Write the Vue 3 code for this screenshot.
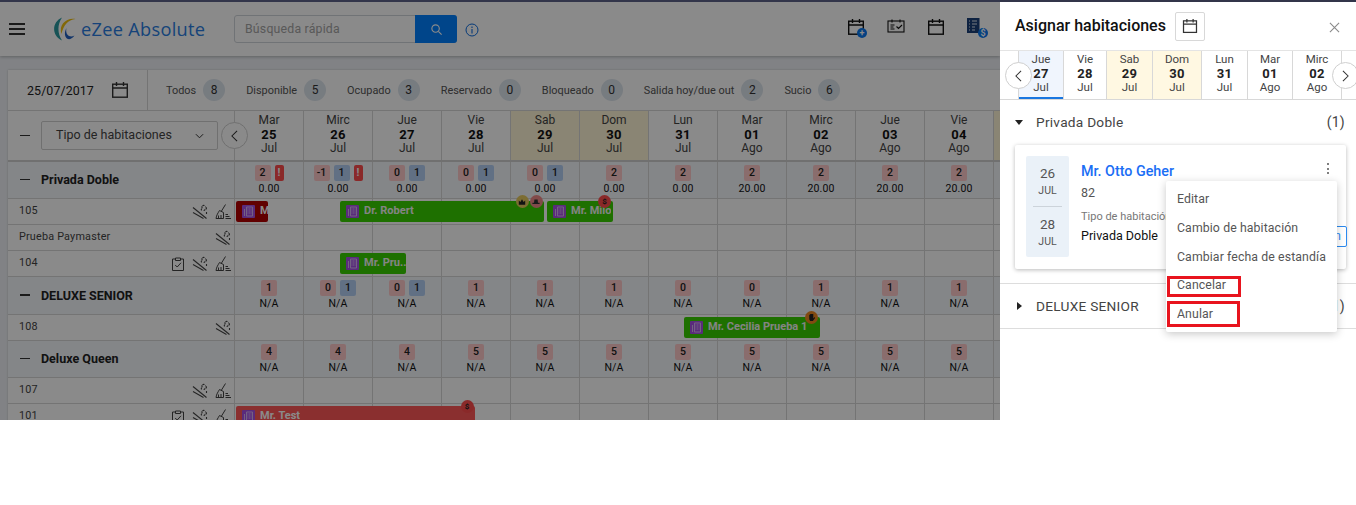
<script setup>
const days = [
  ['Mar','25','Jul'],['Mirc','26','Jul'],['Jue','27','Jul'],['Vie','28','Jul'],['Sab','29','Jul',1],['Dom','30','Jul',1],
  ['Lun','31','Jul'],['Mar','01','Ago'],['Mirc','02','Ago'],['Jue','03','Ago'],['Vie','04','Ago'],['Sab','05','Ago',1]
]
const stats = [['Todos',8],['Disponible',5],['Ocupado',3],['Reservado',0],['Bloqueado',0],['Salida hoy/due out',2],['Sucio',6]]
const p = (v, b, w) => ({ v, b, w })
const rows = [
  { type:'g', name:'Privada Doble', h:37, cells:[p(2,0,1),p(-1,1,1),p(0,1),p(0,1),p(0,1),p(2),p(2),p(2),p(2),p(2),p(2)],
    prices:['0.00','0.00','0.00','0.00','0.00','0.00','0.00','20.00','20.00','20.00','20.00'] },
  { type:'r', name:'105', icons:['smoke','broom'], h:26, bookings:[
    { t:'M', x:236, w:32, c:'dark' },
    { t:'Dr. Robert', x:340, w:204, c:'green', badges:[{k:'crown',x:182},{k:'hat',x:196}] },
    { t:'Mr. Milo', x:547, w:66, c:'green', badges:[{k:'dollar',x:57.5}] }
  ]},
  { type:'r', name:'Prueba Paymaster', icons:['smoke'], h:26 },
  { type:'r', name:'104', icons:['clip','smoke','broom'], h:26, bookings:[{ t:'Mr. Pru...', x:340, w:66, c:'green' }] },
  { type:'g', name:'DELUXE SENIOR', h:38, cells:[p(1),p(0,1),p(0,1),p(1),p(1),p(1),p(0),p(0),p(1),p(1),p(1)] },
  { type:'r', name:'108', icons:['smoke'], h:26, bookings:[{ t:'Mr. Cecilia Prueba 1', x:684, w:136, c:'green', badges:[{k:'hand',x:127.5}] }] },
  { type:'g', name:'Deluxe Queen', h:37, cells:[p(4),p(4),p(4),p(5),p(5),p(5),p(5),p(5),p(5),p(5),p(5)] },
  { type:'r', name:'107', icons:['smoke','broom'], h:26 },
  { type:'r', name:'101', icons:['clip','smoke','broom'], h:26, bookings:[{ t:'Mr. Test', x:236, w:239, c:'red', badges:[{k:'dollar',x:231,dark:1}] }] }
]
const strip = [
  ['Jue','27','Jul',45,'act'],['Vie','28','Jul',43,''],['Sab','29','Jul',46,'we'],['Dom','30','Jul',49,'we'],
  ['Lun','31','Jul',46,''],['Mar','01','Ago',45,''],['Mirc','02','Ago',49,'']
]
const menu = ['Editar','Cambio de habitación','Cambiar fecha de estandía','Cancelar','Anular']
</script>

<template>
  <div class="app">
    <svg class="defs" aria-hidden="true">
      <symbol id="smoke" viewBox="0 0 16 16">
        <g fill="none" stroke="currentColor" stroke-width="1.1">
          <path d="M1 3.5 L14.5 14.5"/>
          <path d="M1 8.5 L11.5 14.5"/>
          <path d="M9.5 6.5 C8.5 5 10.5 4.5 10 3 C9.8 2 11 1 12.5 1.5 M12 7 C12 5.5 14.5 5.5 14.5 4 C14.5 3 13.5 3 13 3 M14.5 10 V7.5" stroke-dasharray="2 .5"/>
        </g>
      </symbol>
      <symbol id="broom" viewBox="0 0 16 16">
        <g fill="none" stroke="currentColor" stroke-width="1">
          <path d="M10.5 .5 L6.5 7"/>
          <path d="M4.5 6.5 L8.5 8.5 L8.5 14.5 L1 14.5 C1.5 11 3 9 4.5 6.5 Z"/>
          <path d="M3.5 14.5 V11.5 M6 14.5 V11"/>
          <path d="M10.5 10.5 H13 M10.5 12.5 H14.5 M10.5 14.5 H16"/>
        </g>
      </symbol>
      <symbol id="clip" viewBox="0 0 14 14">
        <g fill="none" stroke="currentColor" stroke-width="1">
          <path d="M4.5 2 H1.5 V13.5 H12.5 V2 H9.5"/>
          <path d="M4.5 1 H9.5 V3.5 H4.5 Z"/>
          <path d="M4.2 8 L6.2 10 L10 5.8"/>
        </g>
      </symbol>
      <symbol id="cal" viewBox="0 0 18 18">
        <g fill="none" stroke="currentColor" stroke-width="1.4">
          <rect x="1.7" y="3.2" width="14.6" height="13" />
          <path d="M1.7 7 H16.3 M5.5 1 V5 M12.5 1 V5"/>
        </g>
      </symbol>
      <symbol id="bld" viewBox="0 0 13 13">
        <rect width="13" height="13" rx="1" fill="#a650e6"/>
        <path d="M2.5 4 V11 M4.5 2 H10.5 V11 H4.5 Z" fill="none" stroke="#d6b4f2" stroke-width="1"/>
        <path d="M5.5 4 H9.5 M5.5 6 H9.5 M5.5 8 H9.5" stroke="#d6b4f2" stroke-width="1" stroke-dasharray="1 .5"/>
      </symbol>
    </svg>

    <div class="strip"></div>
    <div class="body">
      <div class="main">
        <header class="topbar">
          <button class="burger"><i></i><i></i><i></i></button>
          <svg class="logo" viewBox="0 0 24 24" width="24" height="24">
            <path d="M9 .5 C-1 5 -2 18 9 23.500 C4.500 17 4 8 9 .5Z" fill="#2c9aa0"/>
            <path d="M8.500 17 C5.500 8 13 .5 22.500 2 C15 3 10.500 8 8.500 17Z" fill="#f0c010"/>
            <path d="M21.500 18.500 C16 21.500 12 17 13.500 11 C9 19 15 27 21.500 18.500Z" fill="#1f5fc0"/>
          </svg>
          <span class="brand">eZee Absolute</span>
          <div class="search">
            <span class="ph">Búsqueda rápida</span>
            <span class="sbtn">
              <svg viewBox="0 0 14 14" width="13" height="13"><circle cx="6" cy="6" r="4" fill="none" stroke="#fff" stroke-width="1.2"/><path d="M9 9 L12.5 12.5" stroke="#fff" stroke-width="1.2"/></svg>
            </span>
          </div>
          <svg class="info" viewBox="0 0 14 14" width="14" height="14"><circle cx="7" cy="7" r="6" fill="none" stroke="#0a6be0" stroke-width="1"/><path d="M7 6 V10.5 M7 3.5 V5" stroke="#0a6be0" stroke-width="1.1"/></svg>
          <div class="tools">
            <span class="tool"><svg class="ic18"><use href="#cal"/></svg><em class="plus">+</em></span>
            <span class="tool">
              <svg viewBox="0 0 18 18" width="18" height="18"><g fill="none" stroke="#111" stroke-width="1.1"><rect x="1" y="3" width="16" height="11"/><path d="M5 1.5 V4.5 M13 1.5 V4.5 M3.5 7 H7.5 M3.5 9 H6.5 M3.5 11 H7.5 M9.5 8.5 L11.5 10.5 L15 7"/></g></svg>
            </span>
            <span class="tool"><svg class="ic18"><use href="#cal"/></svg></span>
            <span class="tool">
              <svg viewBox="0 0 14 16" width="14" height="16"><rect width="12.5" height="15" fill="#1a3f78"/><path d="M2 3 H3 M5 3 H10 M2 6 H3 M5 6 H10 M2 9 H3 M5 9 H8 M2 12 H3 M5 12 H8" stroke="#dfe6f0"/></svg>
              <em class="tdollar">$</em>
            </span>
          </div>
        </header>

        <section class="card">
          <div class="toolbar">
            <div class="datebox">
              <span>25/07/2017</span>
              <svg class="ic18 dk"><use href="#cal"/></svg>
            </div>
            <div class="stats">
              <span v-for="s in stats" :key="s[0]" class="stat">
                <span class="lab">{{ s[0] }}</span><b class="num">{{ s[1] }}</b>
              </span>
            </div>
          </div>

          <div class="row head">
            <div class="side headside">
              <span class="dash"></span>
              <div class="select">
                <span class="seltxt">Tipo de habitaciones</span>
                <svg viewBox="0 0 10 6" width="9" height="6"><path d="M1 1 L5 5 L9 1" fill="none" stroke="#333" stroke-width="1.1"/></svg>
              </div>
              <button class="nav prev">
                <svg viewBox="0 0 10 14" width="9" height="12"><path d="M8 1 L2 7 L8 13" fill="none" stroke="#333" stroke-width="1.2"/></svg>
              </button>
            </div>
            <div v-for="d in days" :key="d[1]" class="day" :class="{ we: d[3] }">
              <span>{{ d[0] }}</span><b>{{ d[1] }}</b><span>{{ d[2] }}</span>
            </div>
          </div>

          <div v-for="r in rows" :key="r.name" class="row" :class="r.type === 'g' ? 'group' : 'room'" :style="{ height: r.h + 'px' }">
            <template v-if="r.type === 'g'">
              <div class="side gside"><span class="dash"></span><b>{{ r.name }}</b></div>
              <div v-for="(c, i) in r.cells" :key="i" class="cell gcell">
                <div class="chips">
                  <span class="chip pink">{{ c.v }}</span>
                  <span v-if="c.b" class="chip blue">{{ c.b }}</span>
                  <span v-if="c.w" class="chip warn">!</span>
                </div>
                <span class="price">{{ r.prices ? r.prices[i] : 'N/A' }}</span>
              </div>
              <div class="cell"></div>
            </template>
            <template v-else>
              <div class="side rside">
                <span class="rname">{{ r.name }}</span>
                <span class="ricons">
                  <svg v-for="ic in r.icons" :key="ic" class="ric" :class="ic"><use :href="'#' + ic"/></svg>
                </span>
              </div>
              <div v-for="i in 12" :key="i" class="cell"></div>
              <div v-for="b in r.bookings" :key="b.t" class="booking" :class="b.c" :style="{ left: (b.x - 8) + 'px', width: b.w + 'px' }">
                <svg class="bic"><use href="#bld"/></svg>
                <span class="btxt">{{ b.t }}</span>
                <span v-for="g in b.badges" :key="g.k" class="badge" :class="g.k" :style="{ left: (g.x - 6.5) + 'px' }">
                  <template v-if="g.k === 'dollar'">$</template>
                  <svg v-else-if="g.k === 'crown'" viewBox="0 0 10 10" width="8" height="8"><path d="M1 3 L3 5 L5 1.5 L7 5 L9 3 V8.5 H1Z" fill="#222"/></svg>
                  <svg v-else-if="g.k === 'hat'" viewBox="0 0 10 10" width="8" height="8"><path d="M3 2 H7 L7.5 6 H9.5 V7.500 H.5 V6 H2.5Z" fill="#333"/></svg>
                  <svg v-else viewBox="0 0 10 10" width="9" height="9"><path d="M2.5 4 V2 H3.5 V1 H7 V6 L8.5 4.5 L9 5.5 L6.500 9 H3.5 L2.5 7Z" fill="#222"/></svg>
                </span>
              </div>
            </template>
          </div>
        </section>
        <div class="overlay"></div>
      </div>

      <aside class="panel">
        <div class="ptitle">
          <h2>Asignar habitaciones</h2>
          <button class="calbtn"><svg class="ic16"><use href="#cal"/></svg></button>
          <svg class="close" viewBox="0 0 12 12" width="11" height="11"><path d="M1 1 L11 11 M11 1 L1 11" stroke="#8a8a8a" stroke-width="1.2"/></svg>
        </div>
        <div class="pstrip">
          <div class="pspace"></div>
          <div v-for="d in strip" :key="d[1]" class="pday" :class="d[4]" :style="{ width: d[3] + 'px' }">
            <span>{{ d[0] }}</span><b>{{ d[1] }}</b><span class="plast">{{ d[2] }}</span>
          </div>
          <button class="nav pprev"><svg viewBox="0 0 10 14" width="9" height="12"><path d="M8 1 L2 7 L8 13" fill="none" stroke="#333" stroke-width="1.2"/></svg></button>
          <button class="nav pnext"><svg viewBox="0 0 10 14" width="9" height="12"><path d="M2 1 L8 7 L2 13" fill="none" stroke="#333" stroke-width="1.2"/></svg></button>
        </div>

        <div class="acc first">
          <span class="caret down"></span><span class="accname">Privada Doble</span><span class="cnt">(1)</span>
        </div>
        <div class="gcard">
          <div class="dates">
            <div class="dt"><span class="dn">26</span><span class="dm">JUL</span></div>
            <i></i>
            <div class="dt"><span class="dn">28</span><span class="dm">JUL</span></div>
          </div>
          <div class="ginfo">
            <a class="gname">Mr. Otto Geher</a>
            <span class="gnum">82</span>
            <span class="gtype">Tipo de habitación</span>
            <span class="gval">Privada Doble</span>
          </div>
          <span class="kebab"><i></i><i></i><i></i></span>
          <span class="assign">Asignar habitación</span>
        </div>
        <div class="acc second">
          <span class="caret right"></span><span class="accname">DELUXE SENIOR</span><span class="cnt">(1)</span>
        </div>
        <ul class="menu">
          <li v-for="m in menu" :key="m">{{ m }}</li>
        </ul>
        <span class="mark m1"></span>
        <span class="mark m2"></span>
      </aside>
    </div>
  </div>
</template>

<style scoped>
.app { width: 1356px; height: 420px; overflow: hidden; position: relative; font-family: Roboto, "Liberation Sans", sans-serif; color: #222; display: flex; flex-direction: column; }
.defs { position: absolute; width: 0; height: 0; }
.strip { height: 2px; background: #32354a; flex: none; position: relative; z-index: 3; }
.body { display: flex; flex: 1; min-height: 0; }
.main { width: 1000px; position: relative; overflow: hidden; background: #eef1f5; flex: none; }
.overlay { position: absolute; inset: 0; background: rgba(0,0,0,.46); }

.topbar { height: 54px; background: #fff; display: flex; align-items: center; box-shadow: 0 1px 3px rgba(0,0,0,.25); position: relative; }
.burger { width: 16px; height: 12px; margin-left: 9px; padding: 0; border: 0; background: none; display: flex; flex-direction: column; justify-content: space-between; }
.burger i { display: block; height: 2px; background: #333; }
.logo { margin-left: 28px; }
.brand { margin-left: 4px; width: 128px; font-size: 18.2px; color: #2a7de1; font-family: "Open Sans", sans-serif; letter-spacing: .3px; white-space: nowrap; }
.search { margin-left: 25px; width: 223px; height: 28px; border: 1px solid #cfd4da; border-radius: 3px; box-sizing: border-box; display: flex; align-items: center; justify-content: space-between; }
.ph { font-size: 12.3px; color: #a4a4a4; margin-left: 10px; letter-spacing: .2px; }
.sbtn { width: 42px; height: 28px; margin-right: -1px; background: #0080ff; border-radius: 0 3px 3px 0; display: flex; align-items: center; justify-content: center; }
.info { margin-left: 8px; margin-top: 2px; }
.tools { display: flex; margin-left: 368px; margin-top: -4px; gap: 22px; align-items: center; }
.tool { width: 18px; height: 18px; position: relative; display: block; color: #111; }
.ic18 { width: 18px; height: 18px; display: block; }
.ic16 { width: 16px; height: 16px; display: block; }
.plus, .tdollar { position: absolute; right: -2px; bottom: -2px; width: 10px; height: 10px; border-radius: 50%; background: #0a78f0; color: #fff; font-size: 9px; line-height: 10px; text-align: center; font-style: normal; font-weight: 700; }
.tdollar { right: -3px; bottom: -2px; }

.card { margin: 14px 0 0 8px; background: #fff; width: 1010px; box-shadow: 0 0 2px rgba(0,0,0,.2); }
.toolbar { height: 41px; box-sizing: border-box; border-bottom: 1px solid #d6d6d6; display: flex; }
.datebox { width: 140px; box-sizing: border-box; border-right: 1px solid #d6d6d6; padding-left: 19px; padding-right: 18px; display: flex; align-items: center; justify-content: space-between; font-size: 12.4px; letter-spacing: .1px; }
.dk { color: #333; }
.stats { display: flex; align-items: center; padding-left: 18px; gap: 21px; }
.stat { display: flex; align-items: center; gap: 7px; }
.lab { font-size: 10.9px; color: #555; white-space: nowrap; }
.num { width: 22px; height: 22px; border-radius: 50%; background: #dde5ed; font-weight: 400; font-size: 12px; display: flex; align-items: center; justify-content: center; color: #333; }

.row { display: grid; grid-template-columns: 227px repeat(12, 69px); box-sizing: border-box; position: relative; border-bottom: 1px solid #d6d6d6; }
.head { height: 51px; border-bottom: 2px solid #d0d0d0; }
.side { border-right: 1px solid #d6d6d6; box-sizing: border-box; display: flex; align-items: center; position: relative; }
.headside { padding-left: 12px; }
.dash { display: block; width: 10px; height: 1.5px; background: #333; flex: none; }
.select { margin-left: 11px; width: 177px; height: 29px; box-sizing: border-box; border: 1px solid #cfcfcf; border-radius: 2px; padding: 0 13px 0 14px; display: flex; align-items: center; justify-content: space-between; font-size: 12.5px; color: #444; white-space: nowrap; }
.seltxt { margin-top: -2px; }
.nav { position: absolute; width: 27px; height: 27px; border-radius: 50%; border: 1px solid #cfcfcf; background: #fff; padding: 0; display: flex; align-items: center; justify-content: center; }
.prev { left: 213px; top: 11px; }
.day { border-right: 1px solid #d6d6d6; display: flex; flex-direction: column; align-items: center; font-size: 12px; line-height: 14px; color: #444; padding-top: 2px; box-sizing: border-box; }
.day b { font-size: 13px; font-weight: 700; color: #111; line-height: 14px; letter-spacing: .2px; margin: 1px 0 -1px; }
.day.we { background: #fff5d6; }

.group { background: #f4f7fc; }
.gside { padding: 0 0 1px 12px; font-size: 12.5px; color: #222; }
.gside b { margin-left: 11px; font-weight: 700; white-space: nowrap; }
.cell { border-right: 1px solid #d6d6d6; box-sizing: border-box; }
.gcell { display: flex; flex-direction: column; align-items: center; padding-top: 3px; }
.chips { display: flex; gap: 4px; }
.chip { height: 16px; min-width: 16px; border-radius: 2px; font-size: 10.5px; line-height: 16px; text-align: center; font-weight: 500; color: #222; }
.pink { background: #ffcaca; }
.blue { background: #b4d0f4; }
.warn { background: #ff4d4d; color: #fff; min-width: 9px; font-weight: 700; }
.price { font-size: 10.5px; line-height: 14px; margin-top: 1px; letter-spacing: .15px; color: #111; }

.rside { padding: 0 3px 0 11px; justify-content: space-between; }
.rname { font-size: 10.8px; color: #444; white-space: nowrap; letter-spacing: .2px; margin-top: -2px; }
.ricons { display: flex; align-items: center; gap: 7px; color: #444; }
.ric { width: 16px; height: 16px; display: block; }
.ric.clip { width: 14px; height: 14px; }

.booking { position: absolute; top: 2px; height: 21px; border-radius: 2px; display: flex; align-items: center; padding-left: 6px; box-sizing: border-box; color: #fff; font-size: 11px; font-weight: 700; white-space: nowrap; }
.btxt { margin: -2px 0 0 5px; overflow: hidden; }
.bic { width: 13px; height: 13px; flex: none; }
.green { background: #39cf00; color: #f4f4f4; }
.dark { background: #b40000; }
.red { background: #ff5858; }
.badge { position: absolute; top: -6px; width: 13px; height: 13px; border-radius: 50%; display: flex; align-items: center; justify-content: center; font-size: 8px; font-weight: 700; color: #222; line-height: 1; }
.crown { background: #e6c95e; }
.hat { background: #f08a8a; }
.badge.dollar { background: #ff4c4c; }
.badge.hand { background: #f08a20; }

.panel { width: 356px; background: #fff; position: relative; flex: none; overflow: hidden; }
.ptitle { height: 48px; display: flex; align-items: center; padding-left: 15px; position: relative; }
.ptitle h2 { margin: -2px 0 0; font-size: 16px; font-weight: 500; color: #111; white-space: nowrap; }
.calbtn { margin-left: 9px; width: 30px; height: 29px; background: #fff; border: 1px solid #d8d8d8; border-radius: 2px; padding: 0; display: flex; align-items: center; justify-content: center; color: #333; }
.close { position: absolute; left: 329px; top: 20px; }
.pstrip { height: 50px; display: flex; box-sizing: border-box; border-top: 1px solid #e4e4e4; border-bottom: 1px solid #d8d8d8; position: relative; }
.pspace { width: 18px; border-right: 1px solid #d8d8d8; flex: none; }
.pday { box-sizing: border-box; border-right: 1px solid #d8d8d8; display: flex; flex-direction: column; align-items: center; font-size: 11.5px; line-height: 14px; padding-top: 1px; color: #444; position: relative; }
.pday b { font-size: 13px; line-height: 16px; font-weight: 700; color: #222; letter-spacing: .2px; }
.plast { margin-top: -2px; }
.pday.act { background: #f0f5fd; box-shadow: inset 0 -2px 0 #1976e0; }
.pday.we { background: #fff8e2; }
.pprev { left: 5px; top: 11px; }
.pnext { left: 332px; top: 11px; }

.acc { display: flex; align-items: center; font-size: 13.7px; color: #444; padding: 0 11px 0 15px; letter-spacing: .25px; box-sizing: border-box; }
.acc.first { height: 44px; margin-bottom: 1px; }
.accname { margin-left: 13px; flex: 1; }
.cnt { color: #444; font-size: 14px; }
.caret { width: 0; height: 0; display: block; }
.caret.down { border-left: 4px solid transparent; border-right: 4px solid transparent; border-top: 5px solid #222; }
.caret.right { border-top: 4px solid transparent; border-bottom: 4px solid transparent; border-left: 5px solid #222; margin-left: 2px; margin-right: 1px; }
.acc.second { height: 46px; border-top: 1px solid #ddd; border-bottom: 1px solid #ddd; margin-top: 14px; }

.gcard { margin: 0 10px 0 15px; height: 124px; background: #fff; border-radius: 2px; box-shadow: 0 1px 4px rgba(0,0,0,.28); box-sizing: border-box; padding: 11px 0 0 11px; display: flex; position: relative; }
.dates { width: 43px; height: 101px; background: #eaf1f8; border-radius: 2px; display: flex; flex-direction: column; align-items: center; flex: none; }
.dates i { width: 29px; height: 1px; background: #ccd3da; margin-top: 8px; }
.dt { display: flex; flex-direction: column; align-items: center; padding-top: 9px; color: #555; }
.dn { font-size: 13.5px; line-height: 17px; }
.dm { font-size: 10.5px; line-height: 14px; margin-top: 2px; }
.ginfo { margin-left: 12px; display: flex; flex-direction: column; }
.gname { font-size: 14.3px; font-weight: 500; color: #1a6ef5; line-height: 18px; margin-top: 6px; }
.gnum { font-size: 12.5px; color: #555; line-height: 15px; margin-top: 5px; }
.gtype { font-size: 11px; color: #777; line-height: 14px; margin-top: 10px; white-space: nowrap; }
.gval { font-size: 12.5px; color: #111; line-height: 15px; margin-top: 4px; }
.kebab { position: absolute; left: 312px; top: 18px; display: flex; flex-direction: column; gap: 2.5px; }
.kebab i { width: 2px; height: 2px; background: #555; border-radius: 50%; display: block; }
.assign { position: absolute; right: -1px; top: 81px; height: 21px; box-sizing: border-box; border: 1px solid #2b8af0; border-radius: 2px; padding: 0 5px; font-size: 12px; line-height: 19px; color: #2b8af0; white-space: nowrap; }

.menu { position: absolute; left: 166px; top: 179px; width: 171px; height: 151px; margin: 0; padding: 4px 0 0; list-style: none; background: #fff; border-radius: 2px; box-shadow: 0 2px 8px rgba(0,0,0,.22); box-sizing: border-box; }
.menu li { height: 28.8px; line-height: 28.8px; padding-left: 11px; font-size: 12.3px; color: #555; white-space: nowrap; letter-spacing: .1px; }
.mark { position: absolute; border: 3px solid #e8141e; box-sizing: border-box; }
.m1 { left: 167px; top: 274px; width: 74px; height: 21px; }
.m2 { left: 167px; top: 299px; width: 73px; height: 26px; }
</style>
